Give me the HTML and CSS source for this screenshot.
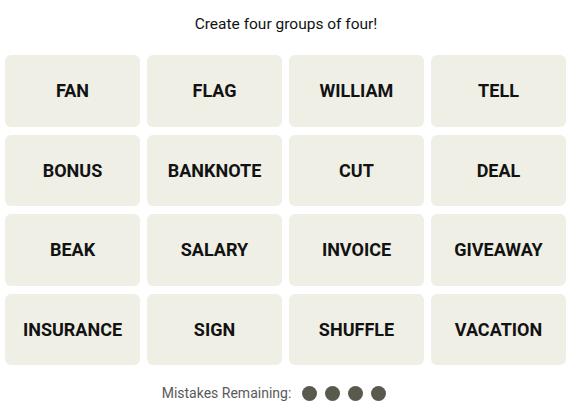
FILE: index.html
```html
<!DOCTYPE html>
<html>
<head>
<meta charset="utf-8">
<link rel="stylesheet" href="styles.css">
</head>
<body>
<div class="game">
  <p class="prompt">Create four groups of four!</p>
  <div class="board">
    <div class="tile">FAN</div>
    <div class="tile">FLAG</div>
    <div class="tile">WILLIAM</div>
    <div class="tile">TELL</div>
    <div class="tile">BONUS</div>
    <div class="tile">BANKNOTE</div>
    <div class="tile">CUT</div>
    <div class="tile">DEAL</div>
    <div class="tile">BEAK</div>
    <div class="tile">SALARY</div>
    <div class="tile">INVOICE</div>
    <div class="tile">GIVEAWAY</div>
    <div class="tile">INSURANCE</div>
    <div class="tile">SIGN</div>
    <div class="tile">SHUFFLE</div>
    <div class="tile">VACATION</div>
  </div>
  <div class="mistakes">
    <span class="label">Mistakes Remaining:</span>
    <span class="dots"><span class="dot"></span><span class="dot"></span><span class="dot"></span><span class="dot"></span></span>
  </div>
</div>
</body>
</html>
```
FILE: styles.css
```css
html, body {
  margin: 0;
  padding: 0;
  background: #ffffff;
}
.game {
  width: 572px;
  height: 406px;
  display: flex;
  flex-direction: column;
  align-items: center;
  font-family: Roboto, "Liberation Sans", sans-serif;
  color: #121212;
}
.prompt {
  margin: 15px 0 0 0;
  font-size: 15.5px;
  line-height: 18px;
  font-weight: 400;
  color: #121212;
}
.board {
  margin-top: 22px;
  align-self: flex-start;
  margin-left: 5px;
  display: grid;
  grid-template-columns: repeat(4, 135px);
  grid-auto-rows: 71.5px;
  column-gap: 7px;
  row-gap: 8px;
}
.tile {
  background: #efefe6;
  border-radius: 6px;
  display: flex;
  align-items: center;
  justify-content: center;
  font-weight: 700;
  font-size: 18px;
  color: #121212;
}
.mistakes {
  margin-top: 20px;
  padding-right: 24px;
  display: flex;
  align-items: center;
  gap: 11px;
  font-size: 14px;
  color: #5a5a5a;
}
.dots {
  display: flex;
  gap: 8px;
}
.dot {
  width: 15px;
  height: 15px;
  border-radius: 50%;
  background: #5a594e;
}
```
